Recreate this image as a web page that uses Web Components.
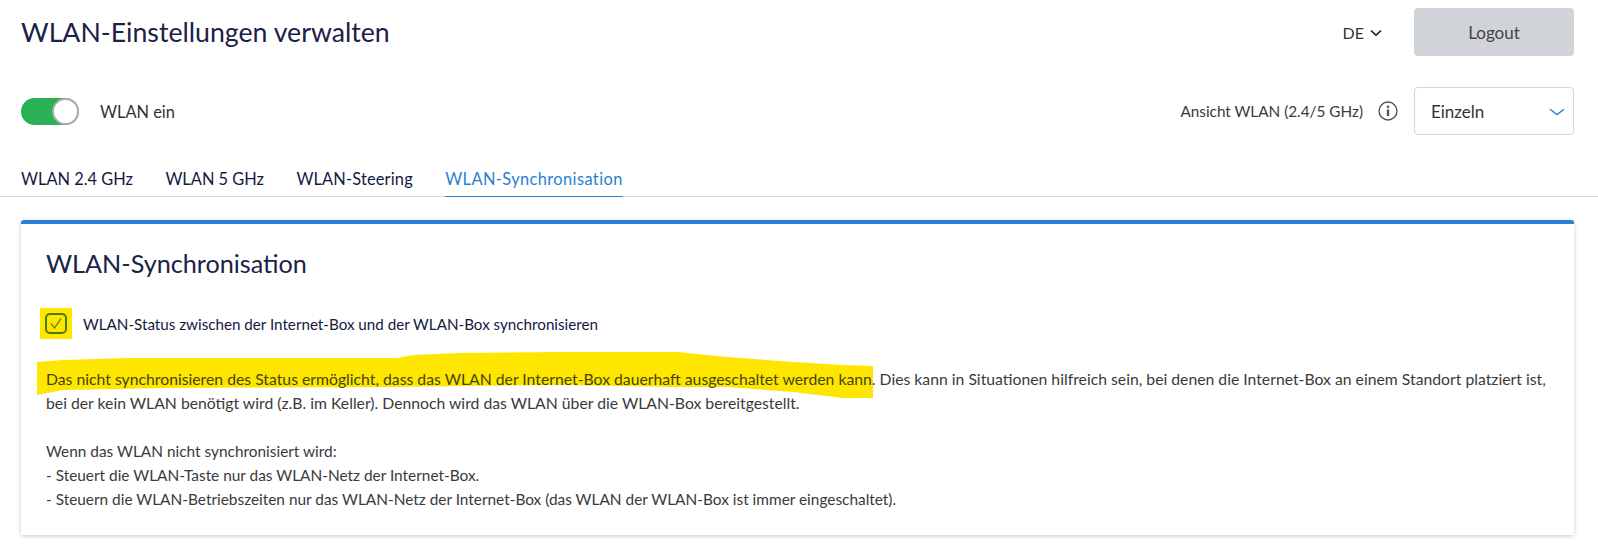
<!DOCTYPE html>
<html lang="de">
<head>
<meta charset="utf-8">
<title>WLAN-Einstellungen verwalten</title>
<style>
  html, body { margin: 0; background: #fff; }
  body { font-family: Lato, "Noto Sans", sans-serif; color: #333; overflow: hidden; }
</style>
</head>
<body>
<wlan-page>
  <page-head slot="head" title-text="WLAN-Einstellungen verwalten"></page-head>
  <wlan-controls slot="controls"></wlan-controls>
  <tab-bar slot="tabs">
    <tab-item>WLAN 2.4 GHz</tab-item>
    <tab-item>WLAN 5 GHz</tab-item>
    <tab-item style="letter-spacing:.16px">WLAN-Steering</tab-item>
    <tab-item active>WLAN-Synchronisation</tab-item>
  </tab-bar>
  <sync-card slot="card" heading="WLAN-Synchronisation">
    <sync-check>WLAN-Status zwischen der Internet-Box und der WLAN-Box synchronisieren</sync-check>
    <marked-text></marked-text>
  </sync-card>
</wlan-page>

<script>
  class WlanPage extends HTMLElement {
    constructor() {
      super();
      this.attachShadow({ mode: "open" });
      this.shadowRoot.innerHTML = `
        <style>
          :host { display: flex; flex-direction: column; width: 1598px; height: 552px; }
          .pad { padding: 0 24px 0 21px; }
        </style>
        <div class="pad"><slot name="head"></slot></div>
        <div class="pad"><slot name="controls"></slot></div>
        <slot name="tabs"></slot>
        <div class="pad"><slot name="card"></slot></div>
      `;
    }
  }

  class PageHead extends HTMLElement {
    constructor() {
      super();
      this.attachShadow({ mode: "open" });
      this.shadowRoot.innerHTML = `
        <style>
          :host { display: flex; align-items: center; height: 48px; padding-top: 8px; }
          h1 { flex: 1; margin: 0; font-size: 26.7px; font-weight: 400; color: #1c2148; }
          .lang { display: flex; align-items: center; gap: 6px; margin-right: 32px; font-size: 16px; color: #333; }
          .lang svg { margin-top: 1px; }
          button {
            width: 160px; height: 48px; border: 0; border-radius: 4px; background: #d0d4d8;
            font: inherit; font-size: 17px; color: #444;
          }
        </style>
        <h1 id="t"></h1>
        <div class="lang">DE
          <svg width="12" height="8" viewBox="0 0 12 8"><path d="M1 1.5 6 6.2 11 1.5" fill="none" stroke="#14193f" stroke-width="1.6"/></svg>
        </div>
        <button>Logout</button>
      `;
    }
    connectedCallback() {
      this.shadowRoot.querySelector("#t").textContent = this.getAttribute("title-text");
    }
  }

  class WlanControls extends HTMLElement {
    constructor() {
      super();
      this.attachShadow({ mode: "open" });
      this.shadowRoot.innerHTML = `
        <style>
          :host { display: flex; align-items: center; height: 48px; margin-top: 31px; }
          .toggle {
            position: relative; width: 58px; height: 27px; border-radius: 14px; background: #2ab155;
          }
          .knob {
            position: absolute; right: 0; top: 0; width: 23px; height: 23px; border: 2px solid #a9aeaa;
            border-radius: 50%; background: #fff;
          }
          .state { flex: 1; margin-left: 21px; font-size: 16.4px; color: #333; }
          .view { font-size: 15.3px; color: #3a3a3c; }
          .info { margin: 0 16px 0 15px; display: block; }
          .select {
            display: flex; align-items: center; justify-content: space-between; box-sizing: border-box;
            width: 160px; height: 48px; padding: 0 8px 0 16px; border: 1px solid #d5d7d9; border-radius: 4px;
            font-size: 17px; color: #333;
          }
          .select svg { margin-top: 2px; }
        </style>
        <div class="toggle"><div class="knob"></div></div>
        <div class="state">WLAN ein</div>
        <div class="view">Ansicht WLAN (2.4/5 GHz)</div>
        <svg class="info" width="20" height="20" viewBox="0 0 20 20">
          <circle cx="10" cy="10" r="9" fill="none" stroke="#555" stroke-width="1.4"/>
          <circle cx="10" cy="5.8" r="1.3" fill="#555"/>
          <path d="M10 8.5v6.5" stroke="#555" stroke-width="2.4" fill="none"/>
        </svg>
        <div class="select">Einzeln
          <svg width="16" height="8" viewBox="0 0 16 8"><path d="M1 1.2 8 6.6 15 1.2" fill="none" stroke="#2a7fd5" stroke-width="1.4"/></svg>
        </div>
      `;
    }
  }

  class TabBar extends HTMLElement {
    constructor() {
      super();
      this.attachShadow({ mode: "open" });
      this.shadowRoot.innerHTML = `
        <style>
          :host {
            display: flex; gap: 32.4px; height: 62px; box-sizing: border-box; padding-left: 21px; align-items: flex-end;
            border-bottom: 1px solid #d8dadc;
          }
        </style>
        <slot></slot>
      `;
    }
  }

  class TabItem extends HTMLElement {
    constructor() {
      super();
      this.attachShadow({ mode: "open" });
      this.shadowRoot.innerHTML = `
        <style>
          :host { display: block; height: 32px; margin-bottom: -1px; font-size: 16.4px; line-height: 28px; color: #14193f; box-sizing: border-box; }
          :host([active]) { color: #2a7fd5; border-bottom: 1px solid #2a7fd5; letter-spacing: .4px; }
        </style>
        <slot></slot>
      `;
    }
  }

  class SyncCard extends HTMLElement {
    constructor() {
      super();
      this.attachShadow({ mode: "open" });
      this.shadowRoot.innerHTML = `
        <style>
          :host {
            display: block; position: relative; box-sizing: border-box; height: 315px; margin-top: 23px;
            padding: 0 20px 0 25px; background: #fff; border-top: 4px solid #2a7fd5; border-radius: 3px 3px 0 0;
            box-shadow: 0 1px 4px rgba(0,0,0,.22);
          }
          h2 { margin: 0; padding-top: 21px; height: 36px; font-size: 25.2px; line-height: 36px; font-weight: 400; color: #1c2148; }
        </style>
        <h2 id="h"></h2>
        <slot></slot>
      `;
    }
    connectedCallback() {
      this.shadowRoot.querySelector("#h").textContent = this.getAttribute("heading");
    }
  }

  class SyncCheck extends HTMLElement {
    constructor() {
      super();
      this.attachShadow({ mode: "open" });
      this.shadowRoot.innerHTML = `
        <style>
          :host { display: flex; align-items: center; margin-top: 27px; margin-left: -6px; font-size: 15.2px; color: #14193f; }
          .mark { display: flex; align-items: center; justify-content: center; width: 32px; height: 31px; background: #ffe600; margin-right: 11px; }
          svg { display: block; }
        </style>
        <div class="mark">
          <svg width="22" height="21" viewBox="0 0 22 21">
            <rect x="1" y="1" width="20" height="19" rx="4" fill="none" stroke="#4b7a08" stroke-width="2"/>
            <path d="M6 10.5 9.5 15 16 5.5" fill="none" stroke="#4b7a08" stroke-width="1.2"/>
          </svg>
        </div>
        <slot></slot>
      `;
    }
  }

  class MarkedText extends HTMLElement {
    constructor() {
      super();
      this.attachShadow({ mode: "open" });
      this.shadowRoot.innerHTML = `
        <style>
          :host { display: block; position: relative; margin-top: 28px; font-size: 15.75px; line-height: 24px; color: #3a3a3c; }
          /* Textmarker liegt hinter dem Text */
          svg { position: absolute; left: -9px; top: -15px; }
          p { position: relative; margin: 0; white-space: nowrap; }
          b { font-weight: 400; color: #45450f; }
          .list { font-size: 15.4px; }
        </style>
        <svg width="840" height="50" viewBox="37 352 840 50">
          <path fill="#ffe600" d="M37 362 L63 360 L130 358 L397 358 L413 355 L460 353 L560 352 L677 352 L727 357 L793 362 L843 365 L873 366 L873 398 L843 398 L793 392 L727 387 L677 387 L560 385 L460 386 L397 387 L163 388 L63 390 L37 395 Z"/>
        </svg>
        <p><b>Das nicht synchronisieren des Status ermöglicht, dass das WLAN der Internet-Box dauerhaft ausgeschaltet werden kann.</b> Dies kann in Situationen hilfreich sein, bei denen die Internet-Box an einem Standort platziert ist,<br>
        bei der kein WLAN benötigt wird (z.B. im Keller). Dennoch wird das WLAN über die WLAN-Box bereitgestellt.<br>
        <br>
        <span class="list">Wenn das WLAN nicht synchronisiert wird:<br>
        - Steuert die WLAN-Taste nur das WLAN-Netz der Internet-Box.<br>
        - Steuern die WLAN-Betriebszeiten nur das WLAN-Netz der Internet-Box (das WLAN der WLAN-Box ist immer eingeschaltet).</span></p>
      `;
    }
  }

  customElements.define("wlan-page", WlanPage);
  customElements.define("page-head", PageHead);
  customElements.define("wlan-controls", WlanControls);
  customElements.define("tab-bar", TabBar);
  customElements.define("tab-item", TabItem);
  customElements.define("sync-card", SyncCard);
  customElements.define("sync-check", SyncCheck);
  customElements.define("marked-text", MarkedText);
</script>
</body>
</html>
